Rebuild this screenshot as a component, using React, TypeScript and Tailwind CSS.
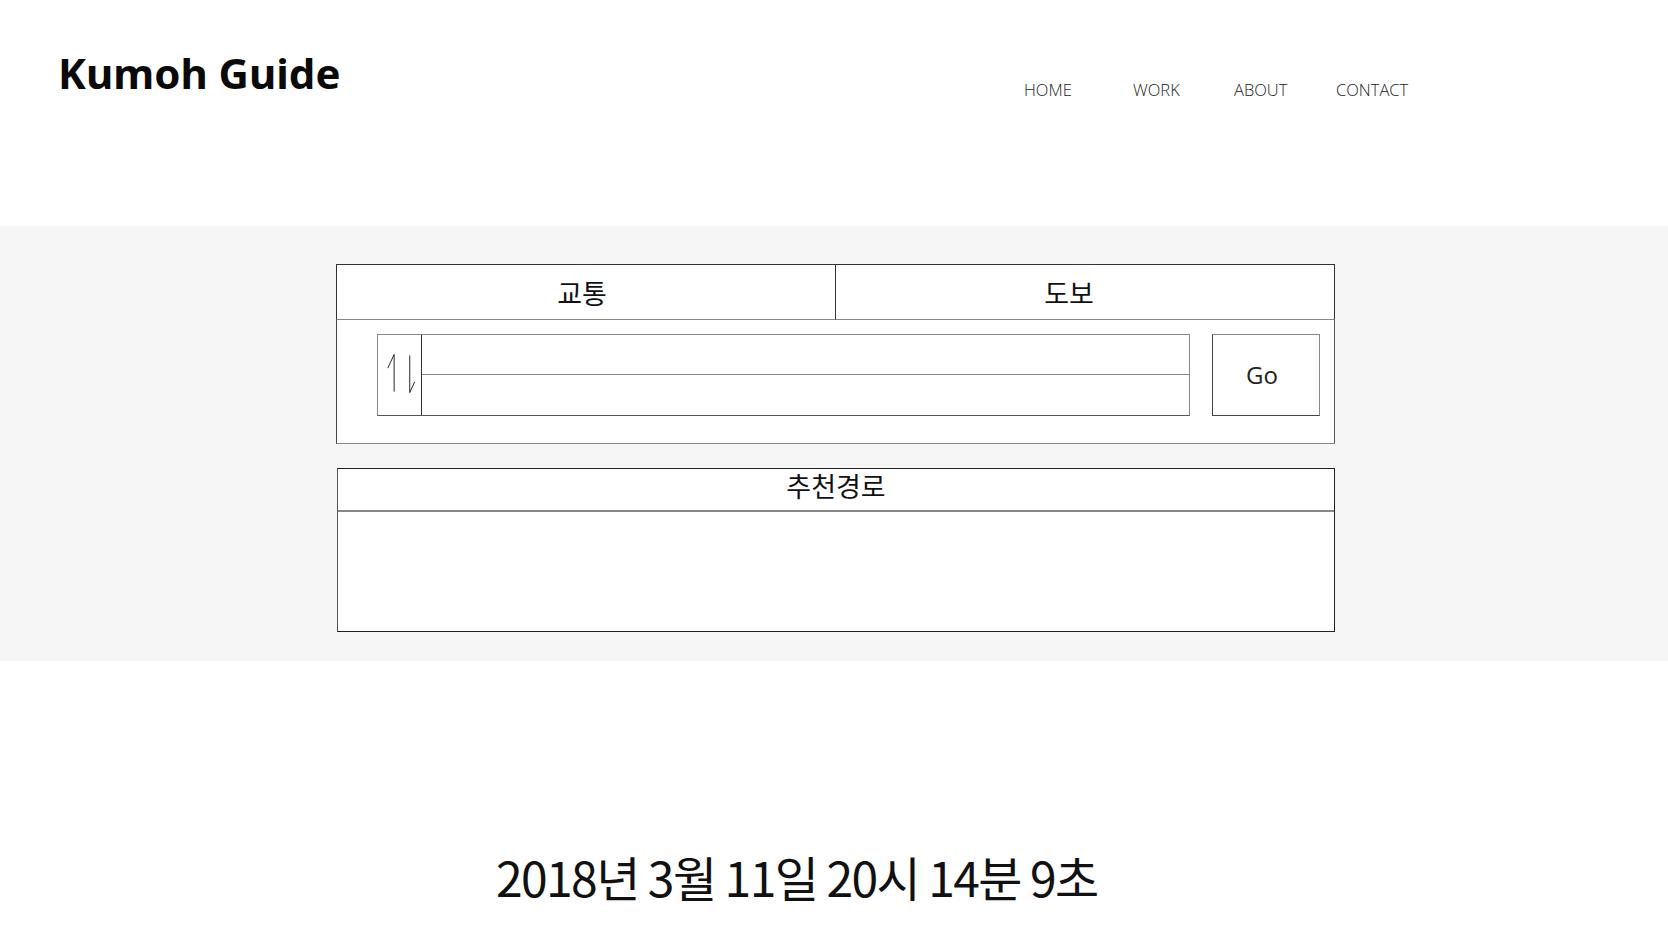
export default function App() {
  return (
    <div className="w-[1668px] min-h-[936px] bg-white text-[#111]">
      <header className="h-[226px] flex items-start">
        <div className="w-[1024px] pl-[58px] pt-[52px]">
          <h1 className="text-[42px] font-bold leading-none font-['Noto_Sans',sans-serif] text-[#0a0a0a]">
            Kumoh Guide
          </h1>
        </div>
        <nav className="pt-[82px] flex text-[16.5px] leading-none font-light font-['Open_Sans',sans-serif] text-[#222]">
          <a className="w-[109px]">HOME</a>
          <a className="w-[101px]">WORK</a>
          <a className="w-[102px]">ABOUT</a>
          <a>CONTACT</a>
        </nav>
      </header>

      <section className="bg-[#f6f6f6] h-[435px] pt-[38px] pl-[336px] font-['Noto_Sans_CJK_KR',sans-serif]">
        <div className="w-[999px] bg-white">
          <div className="flex h-[56px]">
            <div className="w-[499px] border-t border-l border-b border-[#333] border-b-[#888] flex items-center justify-center pr-[8px] text-[27px] leading-none">
              교통
            </div>
            <div className="flex-1 border border-[#333] border-b-[#888] flex items-center justify-center pr-[32px] text-[27px] leading-none">
              도보
            </div>
          </div>
          <div className="h-[124px] border-l border-r border-b border-l-[#444] border-r-[#555] border-b-[#888] pt-[14px] pl-[40px] flex items-start">
            <div className="w-[813px] h-[82px] border border-[#888] border-b-[#555] flex">
              <div className="w-[44px] border-r border-[#333] flex items-center justify-center">
                <svg width="44" height="80" viewBox="0 0 44 80">
                  <path d="M16.5 19 V57 M16.5 19 L10 33" stroke="#222" strokeWidth="1" fill="none" />
                  <path d="M32.5 20 V58 M32.5 58 L37.5 47" stroke="#222" strokeWidth="1" fill="none" />
                </svg>
              </div>
              <div className="flex-1 flex flex-col">
                <div className="h-[40px] border-b border-[#888]" />
                <div className="flex-1" />
              </div>
            </div>
            <button className="ml-[22px] w-[108px] h-[82px] border border-[#888] border-l-[#444] border-b-[#444] flex items-center justify-center pr-[8px] text-[24px] leading-none font-['Open_Sans',sans-serif] text-[#222]">
              Go
            </button>
          </div>
        </div>

        <div className="mt-[24px] ml-[1px] w-[998px] h-[164px] bg-white border border-[#222] border-l-[#555] flex flex-col">
          <div className="h-[43px] border-b-2 border-[#888] flex items-center justify-center pb-[8px] text-[27px] leading-none">
            추천경로
          </div>
          <div className="flex-1" />
        </div>
      </section>

      <div className="pt-[191px] pl-[496px] text-[48px] leading-none tracking-[-1.6px] font-['Noto_Sans_CJK_KR',sans-serif] text-[#111]">
        2018년 3월 11일 20시 14분 9초
      </div>
    </div>
  );
}
